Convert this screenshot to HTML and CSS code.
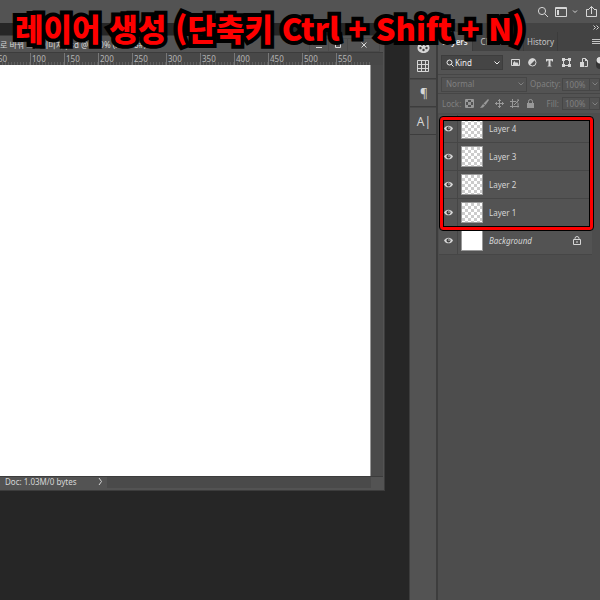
FILE: index.html
```html
<!DOCTYPE html>
<html lang="ko">
<head>
<meta charset="utf-8">
<title>레이어 생성</title>
<link rel="stylesheet" href="styles.css">
</head>
<body>
<div class="app">
  <h1 class="caption">레이어 생성 (단축키 Ctrl + Shift + N)</h1>
  <header class="topbar">
    <button class="icon-btn" aria-label="Search"><svg width="12" height="12" viewBox="0 0 12 12"><circle cx="5" cy="5" r="3.6"/><path d="M7.6 7.6L11 11"/></svg></button>
    <button class="icon-btn workspace-btn" aria-label="Workspace"><svg width="24" height="12" viewBox="0 0 24 12"><path d="M.5 1.500h11v9H.5z"/><path class="solid" d="M1 1h10v2H1zM2 4h2v5H2z"/><path d="M18 4.500l2 2 2-2"/></svg></button>
    <button class="icon-btn" aria-label="Share"><svg width="13" height="13" viewBox="0 0 13 13"><path d="M4 4.500H1.500v7h10v-7H9M6.500 9V1.500M4 4l2.500-2.500L9 4"/></svg></button>
  </header>
  <div class="body">
    <main class="workspace">
      <section class="document">
        <div class="doc-title">
          <span class="doc-name">로 바꿔 그린이미지.psd @ 100% (RGB/8#)</span>
          <div class="window-buttons">
            <button aria-label="Minimize"><svg width="8" height="8" viewBox="0 0 8 8"><path d="M1 6.500h6"/></svg></button>
            <button aria-label="Maximize"><svg width="8" height="8" viewBox="0 0 8 8"><path d="M1.500 1.500h5v5h-5z"/></svg></button>
            <button class="close" aria-label="Close"><svg width="8" height="8" viewBox="0 0 8 8"><path d="M1.500 1.500l5 5M6.500 1.500l-5 5"/></svg></button>
          </div>
        </div>
        <div class="ruler">
          <span class="first">50</span><span>100</span><span>150</span><span>200</span><span>250</span><span>300</span><span>350</span><span>400</span><span>450</span><span>500</span><span>550</span>
        </div>
        <div class="canvas-row"><div class="canvas"></div></div>
        <div class="status">
          <div class="status-info"><span>Doc: 1.03M/0 bytes</span><svg width="5" height="9" viewBox="0 0 5 9"><path d="M1 1l2.500 3.500L1 8"/></svg></div>
          <div class="grip"></div>
        </div>
      </section>
    </main>
    <nav class="dock" aria-label="Collapsed panels">
      <button class="swatch-btn" aria-label="Color"><svg width="13" height="13" viewBox="0 0 13 13"><path class="solid" d="M6.500 1C3 1 .5 3.500.5 7s3 5 6 5 6-2 6-5-2.500-6-6-6z"/><g class="holes"><circle cx="3.500" cy="7" r="1.200"/><circle cx="6.500" cy="9" r="1.200"/><circle cx="9.500" cy="7" r="1.200"/><circle cx="5" cy="4" r="1"/><circle cx="8.500" cy="4" r="1"/></g></svg></button>
      <button class="grid-btn" aria-label="Swatches"><svg width="12" height="12" viewBox="0 0 12 12"><path d="M.5.5h11v11H.5zM.5 4.500h11M.5 8.500h11M4.500.5v11M8.500.5v11"/></svg></button>
      <button class="type-btn" aria-label="Paragraph">¶</button>
      <button class="type-btn" aria-label="Character">A|</button>
    </nav>
    <aside class="panel">
      <div class="panel-top"><svg width="6" height="5" viewBox="0 0 6 5"><path d="M.5.5l2 2-2 2M3.500.5l2 2-2 2"/></svg></div>
      <div class="tabs">
        <button class="tab active">Layers</button><button class="tab">Channels</button><button class="tab">History</button>
        <button class="menu-btn" aria-label="Panel menu"><svg width="8" height="6" viewBox="0 0 8 6"><path d="M0 .5h8M0 2.500h8M0 4.500h8"/></svg></button>
      </div>
      <div class="filters">
        <div class="select kind">
          <svg class="lens" width="8" height="8" viewBox="0 0 8 8"><circle cx="3.500" cy="3.500" r="2.500"/><path d="M5.300 5.300L7.500 7.500"/></svg>
          <select aria-label="Filter kind"><option>Kind</option></select>
          <svg class="chev" width="6" height="4" viewBox="0 0 6 4"><path d="M.5.5L3 3 5.500.5"/></svg>
        </div>
        <button aria-label="Pixel layers"><svg width="9" height="9" viewBox="0 0 9 9"><path d="M.5 1.500h8v6h-8z"/><path class="solid" d="M2 7V5l1.500-2L5 5l1-1 1.500 2v1z"/></svg></button>
        <button aria-label="Adjustment layers"><svg width="9" height="9" viewBox="0 0 9 9"><circle cx="4.500" cy="4.500" r="3.500"/><path class="solid" d="M7.500 1.500A4 4 0 0 0 1.500 7.500z"/></svg></button>
        <button aria-label="Type layers"><svg width="9" height="9" viewBox="0 0 9 9"><path class="solid" d="M1 1h7v2.500H7L6.500 2.500h-1v5l1 .5v.5h-4V8l1-.5v-5h-1L2 3.500H1z"/></svg></button>
        <button aria-label="Shape layers"><svg width="9" height="9" viewBox="0 0 9 9"><path d="M1.500 1.500h6v6h-6z"/><path class="solid" d="M0 0h3v3H0zM6 0h3v3H6zM0 6h3v3H0zM6 6h3v3H6z"/></svg></button>
        <button aria-label="Smart objects"><svg width="9" height="9" viewBox="0 0 9 9"><path d="M3.500 4V.5h3l2 2v6h-3"/><path class="solid" d="M1 4h4v5H1zM6 0l3 3H6z"/></svg></button>
        <button class="toggle" aria-label="Toggle filter"></button>
      </div>
      <div class="row dim blend">
        <div class="select mode">
          <select aria-label="Blend mode" disabled><option>Normal</option></select>
          <svg class="chev" width="6" height="4" viewBox="0 0 6 4"><path d="M.5.5L3 3 5.500.5"/></svg>
        </div>
        <label for="opacity">Opacity:</label>
        <div class="percent"><input id="opacity" value="100%" disabled><svg width="6" height="4" viewBox="0 0 6 4"><path d="M.5.5L3 3 5.500.5"/></svg></div>
      </div>
      <div class="row dim locks">
        <span class="lock-label">Lock:</span>
        <button aria-label="Lock transparency" disabled><svg width="9" height="9" viewBox="0 0 9 9"><path d="M.5.5h8v8h-8z"/><path class="solid" d="M1 1h2v2H1zM6 1h2v2H6zM3 3h3v3H3zM1 6h2v2H1zM6 6h2v2H6z"/></svg></button>
        <button aria-label="Lock pixels" disabled><svg width="9" height="9" viewBox="0 0 9 9"><path class="solid" d="M8 0L9 1 5.500 6 3.500 4.500zM3 5L5 6.500 3 8.500 0 9z"/></svg></button>
        <button aria-label="Lock position" disabled><svg width="9" height="9" viewBox="0 0 9 9"><path d="M4.500 0v9M0 4.500h9M3 2l1.500-1.500L6 2M3 7l1.500 1.500L6 7M2 3L.5 4.500 2 6M7 3l1.500 1.500L7 6"/></svg></button>
        <button aria-label="Lock artboard nesting" disabled><svg width="10" height="9" viewBox="0 0 10 9"><path d="M2.500 0v9M0 2.500h6l2 2v4M8 0v2M0 7.500h9M4 6l5-5"/></svg></button>
        <button aria-label="Lock all" disabled><svg width="9" height="9" viewBox="0 0 9 9"><path d="M2.500 4V2.500a2 2 0 0 1 4 0V4"/><path class="solid" d="M1 4h7v5H1z"/></svg></button>
        <label for="fill">Fill:</label>
        <div class="percent"><input id="fill" value="100%" disabled><svg width="6" height="4" viewBox="0 0 6 4"><path d="M.5.5L3 3 5.500.5"/></svg></div>
      </div>
      <div class="layers">
        <ul class="group">
          <li><button class="eye" aria-label="Visibility"><svg width="9" height="7" viewBox="0 0 9 7"><path class="solid" d="M0 3.500C2-.3 7-.3 9 3.500 7 7.300 2 7.300 0 3.500z"/><circle class="iris" cx="4.500" cy="3.500" r="2"/><circle class="solid" cx="5" cy="3" r=".8"/></svg></button><span class="thumb checker"></span><span>Layer 4</span></li>
          <li><button class="eye" aria-label="Visibility"><svg width="9" height="7" viewBox="0 0 9 7"><path class="solid" d="M0 3.500C2-.3 7-.3 9 3.500 7 7.300 2 7.300 0 3.500z"/><circle class="iris" cx="4.500" cy="3.500" r="2"/><circle class="solid" cx="5" cy="3" r=".8"/></svg></button><span class="thumb checker"></span><span>Layer 3</span></li>
          <li><button class="eye" aria-label="Visibility"><svg width="9" height="7" viewBox="0 0 9 7"><path class="solid" d="M0 3.500C2-.3 7-.3 9 3.500 7 7.300 2 7.300 0 3.500z"/><circle class="iris" cx="4.500" cy="3.500" r="2"/><circle class="solid" cx="5" cy="3" r=".8"/></svg></button><span class="thumb checker"></span><span>Layer 2</span></li>
          <li><button class="eye" aria-label="Visibility"><svg width="9" height="7" viewBox="0 0 9 7"><path class="solid" d="M0 3.500C2-.3 7-.3 9 3.500 7 7.300 2 7.300 0 3.500z"/><circle class="iris" cx="4.500" cy="3.500" r="2"/><circle class="solid" cx="5" cy="3" r=".8"/></svg></button><span class="thumb checker"></span><span>Layer 1</span></li>
        </ul>
        <ul>
          <li><button class="eye" aria-label="Visibility"><svg width="9" height="7" viewBox="0 0 9 7"><path class="solid" d="M0 3.500C2-.3 7-.3 9 3.500 7 7.300 2 7.300 0 3.500z"/><circle class="iris" cx="4.500" cy="3.500" r="2"/><circle class="solid" cx="5" cy="3" r=".8"/></svg></button><span class="thumb"></span><em>Background</em><svg class="padlock" width="8" height="9" viewBox="0 0 8 9"><path d="M.5 3.500h7v5h-7zM2 3.500V2.500a2 2 0 0 1 4 0v1M4 5v2"/></svg></li>
        </ul>
      </div>
    </aside>
  </div>
</div>
</body>
</html>
```
FILE: styles.css
```css
* { box-sizing: border-box; }

body {
  margin: 0;
  background: #262626;
  color: #d6d6d6;
  font: 8px/12px "Noto Sans", "Noto Sans CJK KR", sans-serif;
}

button, select, input {
  margin: 0;
  padding: 0;
  border: 0;
  background: none;
  color: inherit;
  font: inherit;
  opacity: 1;
}

button { display: flex; align-items: center; justify-content: center; }

svg { display: block; flex: none; fill: none; stroke: currentColor; }
.solid { fill: currentColor; stroke: none; }

.app {
  position: relative;
  display: flex;
  flex-direction: column;
  min-height: 100vh;
  overflow: hidden;
}

.caption {
  position: absolute;
  top: 8px;
  left: 15px;
  z-index: 3;
  margin: 0;
  color: #ff0000;
  font: 900 31px/40px "Noto Sans CJK KR", sans-serif;
  white-space: nowrap;
  -webkit-text-stroke: 8px #000;
  paint-order: stroke fill;
  stroke-linejoin: round;
}

.topbar {
  display: flex;
  align-items: center;
  justify-content: flex-end;
  gap: 6px;
  height: 23px;
  padding-right: 2px;
  background: #535353;
}

.body { display: flex; flex: 1; }

.workspace { flex: 1; min-width: 0; padding-top: 13px; }

.document {
  margin-right: 25px;
  border: 2px solid #535353;
  border-width: 2px 1px 2px 0;
  box-shadow: 0 0 0 1px #3c3c3c;
  background: #4a4a4a;
}

.doc-title {
  display: flex;
  align-items: center;
  justify-content: space-between;
  height: 14px;
  padding-right: 3px;
  background: #535353;
}

.doc-name { white-space: nowrap; }

.window-buttons { display: flex; border: 1px solid #4a4a4a; }
.window-buttons button { width: 19px; height: 12px; border-right: 1px solid #4a4a4a; }
.window-buttons .close { width: 31px; border: 0; }

.ruler {
  display: flex;
  height: 13px;
  overflow: hidden;
  border-top: 1px solid #3c3c3c;
  background: #484848;
  color: #b5b5b5;
}

.ruler span {
  flex: none;
  width: 34px;
  padding-left: 1px;
  border-left: 1px solid #777;
  background: repeating-linear-gradient(90deg, transparent 0 2px, #5f5f5f 2px 3px) 0 100% / 100% 3px no-repeat;
}

.ruler .first { margin-left: -4px; }
.ruler span:last-child { width: 36px; }

.canvas-row { padding-right: 12px; }
.canvas { height: 411px; border-right: 1px solid #999; background: #fff; }

.status {
  display: flex;
  justify-content: space-between;
  height: 12px;
  border-top: 1px solid #3c3c3c;
}

.status-info {
  display: flex;
  align-items: center;
  justify-content: space-between;
  width: 107px;
  padding: 0 4px 2px 5px;
  background: #535353;
}

.grip { width: 12px; background: #535353; }

.dock {
  flex: none;
  width: 29px;
  padding-top: 15px;
  border: solid #3d3d3d;
  border-width: 0 2px 0 1px;
  background: #535353;
}

.dock button { width: 100%; height: 28px; border-bottom: 1px solid #3d3d3d; }
.dock .swatch-btn { height: 19px; border: 0; }
.dock .grid-btn { height: 22px; padding-bottom: 4px; }
.dock .type-btn { padding: 2px 0 0 2px; font-size: 12px; border-top: 1px solid #484848; }
.holes { fill: #444; stroke: none; }

.panel { flex: none; width: 162px; background: #4d4d4d; }

.panel-top {
  display: flex;
  align-items: center;
  justify-content: flex-end;
  height: 9px;
  padding-right: 1px;
  background: #434343;
}

.tabs {
  display: flex;
  height: 19px;
  background: #434343;
  color: #c4c4c4;
}

.tab { width: 51px; border-right: 1px solid #3b3b3b; }
.tab.active { width: 35px; background: #535353; color: #ececec; font-weight: 600; }
.tab:nth-child(3) { width: 34px; }
.menu-btn { margin-left: auto; }

.filters {
  display: flex;
  align-items: center;
  gap: 8px;
  height: 24px;
  padding-left: 3px;
  border-bottom: 1px solid #464646;
  background: #535353;
}

.filters > * { flex: none; }

.select {
  position: relative;
  display: flex;
  align-items: center;
  border: 1px solid #3d3d3d;
}

.select select { width: 100%; height: 100%; appearance: none; padding-left: 4px; }
.select .chev { position: absolute; right: 2px; }
.kind { width: 62px; height: 15px; background: #454545; color: #f0f0f0; }
.kind select { padding-left: 13px; }
.kind .lens { position: absolute; left: 4px; }

.toggle { width: 8px; height: 12px; border-radius: 4px; background: radial-gradient(circle at 4px 3px, #ddd 3px, #343434 4px); }

.row {
  display: flex;
  align-items: center;
  height: 19px;
  border-bottom: 1px solid #464646;
  background: #535353;
}

.dim { color: #808080; }
.blend { padding-left: 3px; }
.mode { width: 86px; height: 15px; border-color: #464646; }
.blend label { margin-left: 3px; }

.percent {
  display: flex;
  align-items: center;
  width: 38px;
  height: 13px;
  margin-left: auto;
  border: 1px solid #464646;
}

.percent input { width: 27px; height: 100%; padding-left: 2px; border-right: 1px solid #464646; }
.percent svg { margin-left: 2px; }

.locks { gap: 6px; padding-left: 4px; border: 0; color: #999; }
.lock-label, .locks label { color: #808080; }
.lock-label { margin-right: -2px; }
.locks label { margin-left: auto; }
.locks .percent { margin-left: -3px; color: #808080; }

.layers { padding: 2px 8px 0 1px; }
.layers ul { margin: 0; padding: 0; list-style: none; }
.layers .group { position: relative; }

.layers .group::after {
  content: "";
  position: absolute;
  inset: 2px -1px -3px 1px;
  border: 3px solid #ff0000;
  border-radius: 3px;
  outline: 1px solid #000;
  box-shadow: inset 0 0 0 1px #000;
  pointer-events: none;
}

.layers li {
  display: flex;
  align-items: center;
  height: 28px;
  border-bottom: 1px solid #464646;
  background: #535353;
}

.eye { width: 19px; height: 100%; border-right: 1px solid #464646; }
.iris { fill: #444; stroke: none; }

.thumb {
  width: 22px;
  height: 21px;
  margin: 0 6px 0 3px;
  border: 1px solid #999;
  background: #fff;
}

.checker { background: repeating-conic-gradient(#ccc 0 25%, #fff 0 50%) 0 0 / 6px 6px; }
.padlock { margin: 0 11px 0 auto; }
```
